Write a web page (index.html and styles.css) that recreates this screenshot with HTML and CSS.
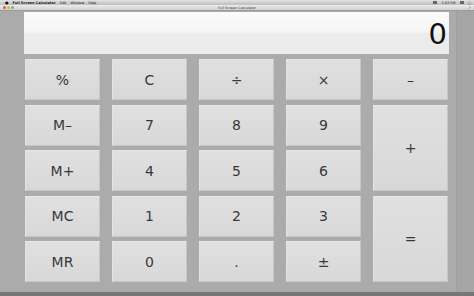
FILE: index.html
```html
<!DOCTYPE html>
<html>
<head>
<meta charset="utf-8">
<link rel="stylesheet" href="styles.css">
</head>
<body>
<div class="menubar">
  <div class="menu-left">
    <span class="apple">&#9679;</span>
    <span class="app">Full Screen Calculator</span>
    <span>Edit</span>
    <span>Window</span>
    <span>Help</span>
  </div>
  <div class="menu-right">
    <span class="ico"></span>
    <span>1:03 PM</span>
    <span class="ico"></span>
    <span class="mag">&#9675;</span>
  </div>
</div>
<div class="titlebar">
  <div class="lights"><i class="red"></i><i class="yel"></i><i class="grn"></i></div>
  <div class="title">Full Screen Calculator</div>
  <div class="fs">&#8599;</div>
</div>
<div class="window">
  <div class="content">
    <div class="display"><span class="value">0</span></div>
    <div class="keys">
      <button class="key">%</button>
      <button class="key">C</button>
      <button class="key">÷</button>
      <button class="key">×</button>
      <button class="key">–</button>
      <button class="key">M–</button>
      <button class="key">7</button>
      <button class="key">8</button>
      <button class="key">9</button>
      <button class="key tall">+</button>
      <button class="key">M+</button>
      <button class="key">4</button>
      <button class="key">5</button>
      <button class="key">6</button>
      <button class="key">MC</button>
      <button class="key">1</button>
      <button class="key">2</button>
      <button class="key">3</button>
      <button class="key tall">=</button>
      <button class="key">MR</button>
      <button class="key">0</button>
      <button class="key">.</button>
      <button class="key">±</button>
    </div>
  </div>
  <div class="edge"></div>
</div>
<div class="bottom"></div>
</body>
</html>
```
FILE: styles.css
```css
html, body {
  margin: 0;
  padding: 0;
}
body {
  width: 474px;
  height: 296px;
  overflow: hidden;
  background: #a9a9a9;
  font-family: "DejaVu Sans", "Liberation Sans", sans-serif;
  display: flex;
  flex-direction: column;
}
.menubar {
  height: 5px;
  flex: none;
  background: linear-gradient(#e2e2e2, #bdbdbd);
  display: flex;
  justify-content: space-between;
  align-items: center;
  font-size: 3.5px;
  color: #222;
  padding: 0 3px 0 5px;
}
.menu-left, .menu-right {
  display: flex;
  align-items: center;
  gap: 4px;
}
.apple { font-size: 4px; color: #111; }
.app { font-weight: bold; }
.ico {
  width: 4px;
  height: 3px;
  background: #666;
  display: inline-block;
}
.mag { font-size: 4px; }
.titlebar {
  height: 5px;
  flex: none;
  background: linear-gradient(#ececec, #cfcfcf);
  border-bottom: 1px solid #9c9c9c;
  position: relative;
  display: flex;
  align-items: center;
  justify-content: center;
}
.lights {
  position: absolute;
  left: 3px;
  top: 1px;
  display: flex;
  gap: 1px;
}
.lights i {
  width: 3px;
  height: 3px;
  border-radius: 50%;
  display: block;
}
.red { background: #d65a4f; }
.yel { background: #d9b14a; }
.grn { background: #8cb15a; }
.title {
  font-size: 3.5px;
  color: #444;
}
.fs {
  position: absolute;
  right: 3px;
  top: 0;
  font-size: 4px;
  color: #666;
}
.window {
  flex: 1;
  display: flex;
  background: #ababab;
}
.content {
  width: 425px;
  padding: 1px 7px 0 24px;
  display: flex;
  flex-direction: column;
}
.edge {
  flex: 1;
  background: #a5a5a5;
  border-left: 1px solid #9f9f9f;
}
.display {
  height: 42px;
  background: linear-gradient(#fbfbfb 0%, #f5f5f5 48%, #ececec 52%, #ebebeb 100%);
  display: flex;
  align-items: center;
  justify-content: flex-end;
  padding-right: 2px;
  box-sizing: border-box;
}
.value {
  font-size: 29px;
  color: #111;
  line-height: 1;
  margin-top: 2px;
}
.keys {
  margin: 5px 0 0 1px;
  width: 423px;
  display: grid;
  grid-template-columns: repeat(5, 75px);
  grid-template-rows: repeat(5, 41px);
  column-gap: 12px;
  row-gap: 4.5px;
}
.key {
  margin: 0;
  padding: 0;
  font-family: "DejaVu Sans", "Liberation Sans", sans-serif;
  font-size: 14px;
  color: #383838;
  background: linear-gradient(#e0e0e0, #d8d8d8);
  border: 1px solid #c6c6c6;
  border-top-color: #e8e8e8;
  border-left-color: #e4e4e4;
  box-sizing: border-box;
}
.tall {
  grid-row: span 2;
  grid-column: 5;
}
.bottom {
  height: 4px;
  flex: none;
  background: #777;
}
```
